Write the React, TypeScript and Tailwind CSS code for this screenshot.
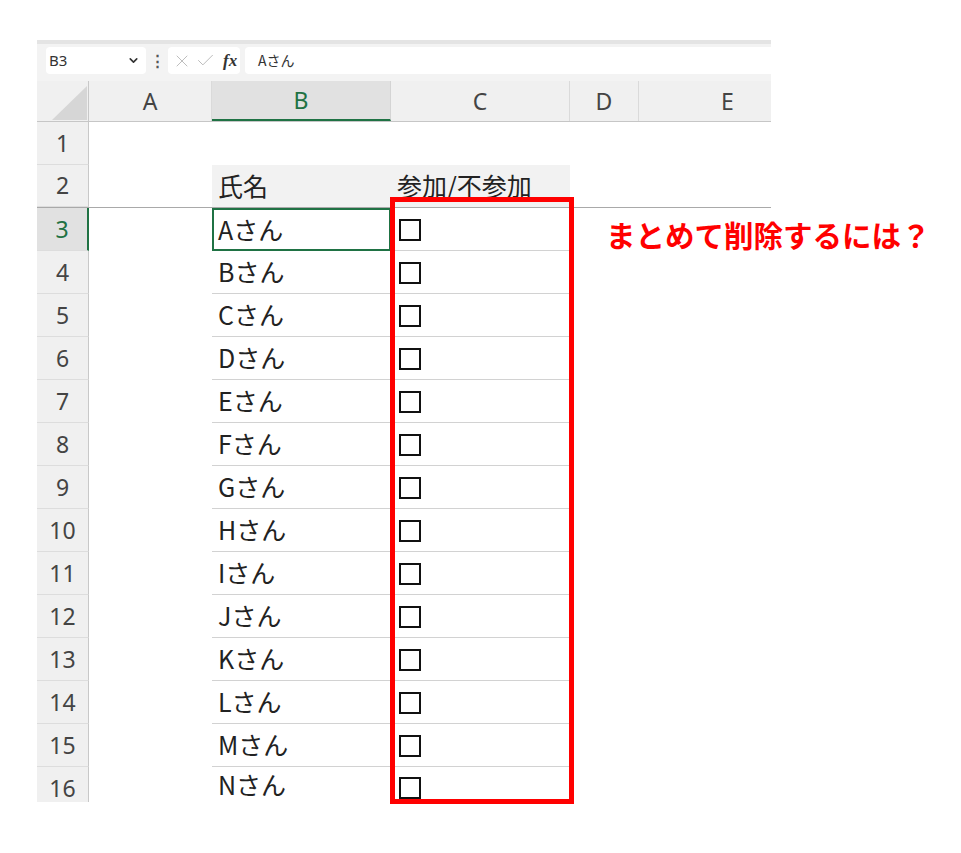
import React from 'react';
import { ChevronDown, X, Check } from 'lucide-react';

const names = ['A', 'B', 'C', 'D', 'E', 'F', 'G', 'H', 'I', 'J', 'K', 'L', 'M', 'N'];

const cols = [
  { key: 'A', w: 'w-[123px]' },
  { key: 'B', w: 'w-[179px]' },
  { key: 'C', w: 'w-[179px]' },
  { key: 'D', w: 'w-[69px]' },
  { key: 'E', w: 'w-[178px]' },
];

const jp = { fontFamily: '"Noto Sans CJK JP", "Noto Sans", sans-serif' };
const ui = { fontFamily: '"Noto Sans", "Liberation Sans", sans-serif' };

const RowHead: React.FC<{ n: number; active?: boolean; freeze?: boolean; last?: boolean }> = ({ n, active, freeze, last }) => (
  <div
    style={ui}
    className={`w-[52px] shrink-0 flex items-center justify-center text-[23px] ${last ? 'pt-[6px] leading-none' : ''} ${
      active ? 'bg-[#e1e1e1] text-[#1f7244] border-r-2 border-r-[#1f7244]' : 'bg-[#f0f0f0] text-[#444] border-r border-r-[#c8c8c8]'
    } ${freeze ? 'border-b border-b-[#a9a9a9]' : last ? '' : 'border-b border-b-[#dddddd]'}`}
  >
    {n}
  </div>
);

export default function App() {
  return (
    <div className="relative w-[961px] h-[853px] bg-white overflow-hidden">
      <div className="pt-[40px] pl-[37px]">
        <div className="w-[734px] h-[762px] overflow-hidden flex flex-col">
          {/* top strip */}
          <div className="h-[4px] bg-[#e4e4e4] shrink-0" />

          {/* formula bar */}
          <div className="h-[37px] shrink-0 bg-[#f3f3f3] flex items-start pt-[3px] pl-[9px]">
            <div style={ui} className="w-[100px] h-[27px] bg-white rounded-[4px] flex items-center justify-between pl-[3px] pr-[6px] text-[15px] text-[#333]">
              <span>B3</span>
              <ChevronDown size={13} strokeWidth={3} className="text-[#333]" />
            </div>
            <div className="w-[22px] h-[27px] flex items-center justify-center text-[#555] text-[15px] font-bold">⋮</div>
            <div className="w-[72px] h-[27px] bg-white rounded-[4px] flex items-center pl-[4px] gap-[3px]">
              <X size={20} strokeWidth={1.1} className="text-[#b8b8b8]" />
              <Check size={21} strokeWidth={1.1} className="text-[#b8b8b8]" />
              <span style={{ fontFamily: '"Liberation Serif", serif' }} className="italic font-bold text-[17px] text-[#333] ml-[4px] leading-none">
                fx
              </span>
            </div>
            <div style={jp} className="ml-[5px] flex-1 h-[27px] bg-white rounded-l-[4px] flex items-center pl-[13px] text-[14px] text-[#333]">
              Aさん
            </div>
          </div>

          {/* column header */}
          <div className="h-[41px] shrink-0 flex bg-[#f0f0f0] border-b border-b-[#c6c6c6]">
            <div className="w-[52px] shrink-0 relative border-r border-r-[#c8c8c8]">
              <svg className="absolute left-[15px] top-[5px]" width="36" height="34" viewBox="0 0 36 34">
                <polygon points="0,34 35,0 35,34" fill="#d6d6d6" />
              </svg>
            </div>
            {cols.map((c) => (
              <div
                key={c.key}
                style={ui}
                className={`${c.w} shrink-0 flex items-center justify-center text-[23px] ${
                  c.key === 'B'
                    ? 'bg-[#e1e1e1] text-[#1f7244] border-b-2 border-b-[#1f7244] border-r border-r-[#d4d4d4]'
                    : 'text-[#444] border-r border-r-[#dadada]'
                }`}
              >
                {c.key}
              </div>
            ))}
          </div>

          {/* row 1 */}
          <div className="h-[43px] shrink-0 flex">
            <RowHead n={1} />
            <div className="flex-1" />
          </div>

          {/* row 2 */}
          <div className="h-[43px] shrink-0 flex border-b border-b-[#a9a9a9]">
            <RowHead n={2} />
            <div className="w-[123px] shrink-0" />
            <div style={jp} className="w-[179px] shrink-0 bg-[#f2f2f2] flex items-center pl-[6px] text-[25px] text-[#222]">
              氏名
            </div>
            <div style={jp} className="w-[179px] shrink-0 bg-[#f2f2f2] flex items-center pl-[6px] text-[25px] text-[#222] whitespace-nowrap">
              参加/不参加
            </div>
            <div className="flex-1" />
          </div>

          {/* rows 3-16 */}
          {names.map((n, i) => {
            const last = i === names.length - 1;
            return (
              <div key={n} className={`${last ? 'h-[36px]' : 'h-[43px]'} shrink-0 flex`}>
                <RowHead n={i + 3} active={i === 0} last={last} />
                <div className="w-[123px] shrink-0" />
                <div
                  style={jp}
                  className={`w-[179px] shrink-0 flex items-center text-[25px] text-[#222] ${
                    i === 0 ? 'border-2 border-[#1f7244] pl-[4px]' : last ? 'pl-[6px]' : 'border-b border-b-[#d2d2d2] pl-[6px]'
                  }`}
                >
                  {n}さん
                </div>
                <div className={`w-[179px] shrink-0 flex items-center pl-[8px] ${last ? 'pt-[6px]' : 'pt-[2px] border-b border-b-[#d2d2d2]'}`}>
                  <div className="w-[22px] h-[22px] border-2 border-[#111]" />
                </div>
                <div className="flex-1" />
              </div>
            );
          })}
        </div>
      </div>

      {/* annotation */}
      <div className="absolute left-[390px] top-[197px] w-[184px] h-[607px] border-[5px] border-[#ff0000]" />
      <div style={jp} className="absolute left-[606px] top-[220px] text-[29.5px] leading-none font-bold text-[#ff0000] whitespace-nowrap">
        まとめて削除するには？
      </div>
    </div>
  );
}
